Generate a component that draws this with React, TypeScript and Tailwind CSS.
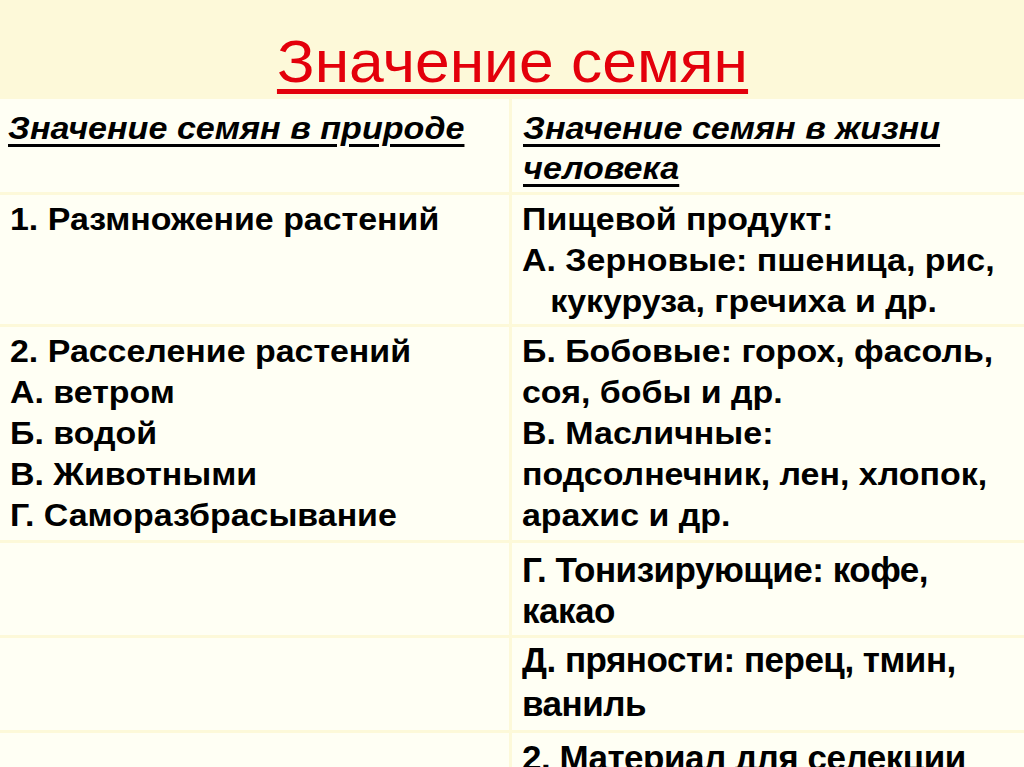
const ROWS: { left: string[]; right: string[]; h: string; narrow?: boolean; pad?: string; lead?: string }[] = [
  {
    left: ['1. Размножение растений'],
    right: ['Пищевой продукт:', 'А. Зерновые: пшеница, рис,', '\u00a0\u00a0\u00a0кукуруза, гречиха и др.'],
    h: 'h-[129px]',
  },
  {
    left: ['2. Расселение растений', 'А. ветром', 'Б. водой', 'В. Животными', 'Г. Саморазбрасывание'],
    right: ['Б. Бобовые: горох, фасоль,', 'соя, бобы и др.', 'В. Масличные:', 'подсолнечник, лен, хлопок,', 'арахис и др.'],
    h: 'h-[213px]',
  },
  { left: [], right: ['Г. Тонизирующие: кофе,', 'какао'], h: 'h-[92px]', narrow: true, pad: 'pt-[6px]', lead: 'leading-[41px]' },
  { left: [], right: ['Д. пряности: перец, тмин,', 'ваниль'], h: 'h-[92px]', narrow: true, pad: 'pt-[0px]', lead: 'leading-[44px]' },
  { left: [], right: ['2. Материал для селекции'], h: 'h-[60px]', narrow: true, pad: 'pt-[4px]', lead: 'leading-[41px]' },
]

function Cell({ lines, narrow, pad, lead }: { lines: string[]; narrow?: boolean; pad?: string; lead?: string }) {
  return (
    <div className={`bg-[#fffff4] pl-[10px] overflow-hidden ${pad ?? 'pt-[4px]'}`}>
      {lines.map((l, i) =>
        narrow ? (
          <div
            key={i}
            className={`text-[35px] ${lead} font-bold text-black whitespace-pre origin-left scale-x-[1.0] tracking-[-0.5px]`}
          >
            {l}
          </div>
        ) : (
          <div key={i} className="text-[32px] leading-[41px] font-bold text-black whitespace-pre origin-left scale-x-[1.06]">
            {l}
          </div>
        )
      )}
    </div>
  )
}

export default function App() {
  return (
    <div className="w-[1024px] h-[767px] overflow-hidden bg-[#fdf9d9] [font-family:'Liberation_Sans',Arial,sans-serif]">
      {/* Title */}
      <div className="h-[99px] flex justify-center items-start pt-[37px]">
        <h1 className="text-[60px] leading-[50px] text-[#e3000b] border-b-[5px] border-[#e3000b] pb-[2px] scale-x-[1.04]">
          Значение семян
        </h1>
      </div>

      {/* Table */}
      <div className="grid grid-cols-[509px_1fr] gap-[3px]">
        <div className="bg-[#fffff4] h-[93px] pl-[8px] pt-[10px]">
          <div className="text-[31px] leading-[40px] font-bold italic underline decoration-[3px] underline-offset-[5px] text-black origin-left scale-x-[1.1] whitespace-nowrap">
            Значение семян в природе
          </div>
        </div>
        <div className="bg-[#fffff4] h-[93px] pl-[11px] pt-[10px]">
          <div className="text-[31px] leading-[40px] font-bold italic underline decoration-[3px] underline-offset-[5px] text-black origin-left scale-x-[1.1] w-[400px]">
            Значение семян в жизни человека
          </div>
        </div>

        {ROWS.map((r, i) => (
          <div key={i} className="contents">
            <div className={`${r.h} flex flex-col`}>
              <Cell lines={r.left} narrow={r.narrow} pad={r.pad} lead={r.lead} />
              <div className="flex-1 bg-[#fffff4]" />
            </div>
            <div className={`${r.h} flex flex-col`}>
              <Cell lines={r.right} narrow={r.narrow} pad={r.pad} lead={r.lead} />
              <div className="flex-1 bg-[#fffff4]" />
            </div>
          </div>
        ))}
      </div>
    </div>
  )
}
